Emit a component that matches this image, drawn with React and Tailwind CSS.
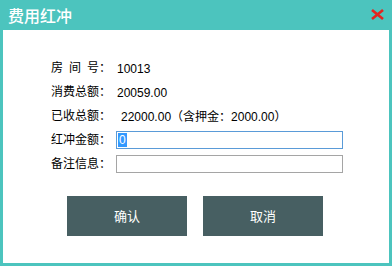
import React from "react";

const font = { fontFamily: '"Liberation Sans", "Noto Sans CJK SC", sans-serif' };

function Row({ label, children }) {
  return (
    <div className="flex h-6 items-center">
      <div className="w-[65px] shrink-0 text-[12px] text-black">{label}</div>
      <div className="flex-1">{children}</div>
    </div>
  );
}

export default function App() {
  return (
    <div className="w-[392px] h-[266px] bg-[#4cc4be] flex flex-col px-[3px] pb-[3px]" style={font}>
      <div className="h-[30px] flex items-center justify-between pl-[5px] pr-[4px]">
        <span className="text-white text-[16px] leading-none font-medium" style={{ fontFamily: '"Noto Sans CJK SC", sans-serif' }}>费用红冲</span>
        <svg width="15" height="11" viewBox="0 0 15 11" className="mt-[-1px]">
          <path d="M2 1 L13 10 M13 1 L2 10" stroke="#e3241f" strokeWidth="2.6" strokeLinecap="butt" />
        </svg>
      </div>
      <div className="flex-1 bg-white flex flex-col pt-[26px] pl-[48px]">
        <Row label={<span className="flex items-center"><span className="flex w-[48px] justify-between"><span>房</span><span>间</span><span>号</span></span><span>：</span></span>}>
          <span className="text-[12px] pl-[1px]">10013</span>
        </Row>
        <Row label="消费总额：">
          <span className="text-[12px] pl-[1px]">20059.00</span>
        </Row>
        <Row label="已收总额：">
          <span className="text-[12px] pl-[5px]">22000.00（含押金：2000.00）</span>
        </Row>
        <Row label="红冲金额：">
          <div className="w-[227px] h-[18px] border border-[#5a9bd8] flex items-center pl-[1px]">
            <span className="bg-[#3399ff] text-white text-[12px] leading-[14px] px-[1px]">0</span>
          </div>
        </Row>
        <Row label="备注信息：">
          <div className="w-[227px] h-[18px] border border-[#a5a5a5]" />
        </Row>
        <div className="flex gap-[16px] mt-[20px] pl-[16px]">
          <div className="w-[120px] h-[40px] bg-[#475f62] flex items-center justify-center text-white text-[13px]" style={{ fontFamily: '"Noto Sans CJK SC", sans-serif' }}>确认</div>
          <div className="w-[120px] h-[40px] bg-[#475f62] flex items-center justify-center text-white text-[13px]" style={{ fontFamily: '"Noto Sans CJK SC", sans-serif' }}>取消</div>
        </div>
      </div>
    </div>
  );
}
